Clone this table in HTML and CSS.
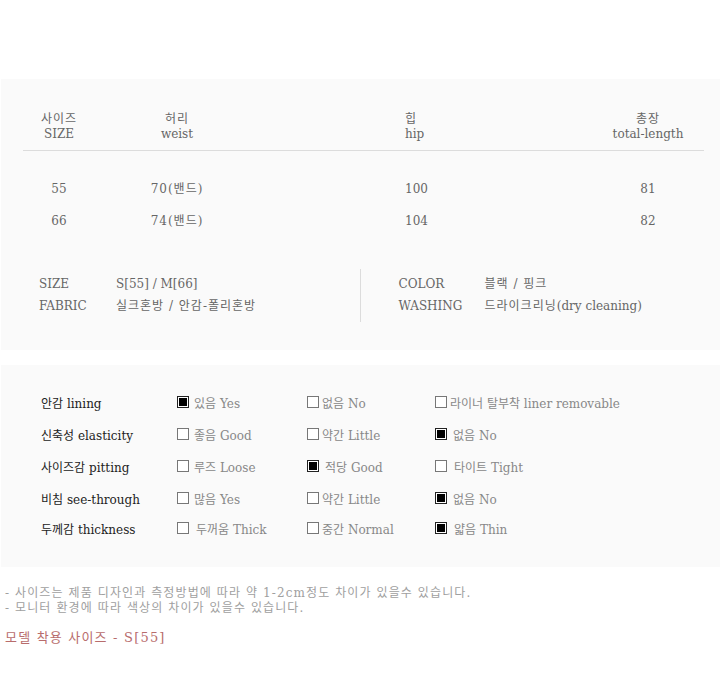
FILE: index.html
```html
<!DOCTYPE html>
<html lang="ko">
<head>
<meta charset="utf-8">
<title>Size info</title>
<link rel="stylesheet" href="styles.css">
</head>
<body>
<div class="page">
  <section class="box size-box">
    <div class="size-table">
      <div class="cell c1 head"><span class="ko">사이즈</span><br>SIZE</div>
      <div class="cell c2 head"><span class="ko">허리</span><br>weist</div>
      <div class="cell c3 head">힙<br>hip</div>
      <div class="cell c4 head"><span class="ko">총장</span><br>total-length</div>
      <div class="rule"></div>
      <div class="cell c1 row first">55</div>
      <div class="cell c2 row first ko">70(밴드)</div>
      <div class="cell c3 row first">100</div>
      <div class="cell c4 row first">81</div>
      <div class="cell c1 row">66</div>
      <div class="cell c2 row ko">74(밴드)</div>
      <div class="cell c3 row">104</div>
      <div class="cell c4 row">82</div>
    </div>
    <div class="info">
      <div class="info-half left">
        <div class="info-line"><span class="k k1">SIZE</span><span class="v">S[55] / M[66]</span></div>
        <div class="info-line"><span class="k k1">FABRIC</span><span class="v ko">실크혼방 / 안감-폴리혼방</span></div>
      </div>
      <div class="info-half right">
        <div class="info-line"><span class="k k2">COLOR</span><span class="v ko">블랙 / 핑크</span></div>
        <div class="info-line"><span class="k k2">WASHING</span><span class="v"><span class="ko">드라이크리닝</span>(dry cleaning)</span></div>
      </div>
    </div>
  </section>

  <section class="box feel-box">
    <div class="feel">
      <div class="lbl">안감 lining</div>
      <div class="opt a"><span class="cb on white"></span>있음 Yes</div>
      <div class="opt b"><span class="cb white"></span>없음 No</div>
      <div class="opt c"><span class="cb white"></span>라이너 탈부착 liner removable</div>

      <div class="lbl">신축성 elasticity</div>
      <div class="opt a"><span class="cb"></span>좋음 Good</div>
      <div class="opt b"><span class="cb"></span>약간 Little</div>
      <div class="opt c wide"><span class="cb on"></span>없음 No</div>

      <div class="lbl">사이즈감 pitting</div>
      <div class="opt a"><span class="cb"></span>루즈 Loose</div>
      <div class="opt b wide"><span class="cb on"></span>적당 Good</div>
      <div class="opt c wider"><span class="cb"></span>타이트 Tight</div>

      <div class="lbl">비침 see-through</div>
      <div class="opt a"><span class="cb"></span>많음 Yes</div>
      <div class="opt b"><span class="cb"></span>약간 Little</div>
      <div class="opt c wide"><span class="cb on"></span>없음 No</div>

      <div class="lbl">두께감 thickness</div>
      <div class="opt a wider"><span class="cb"></span>두꺼움 Thick</div>
      <div class="opt b"><span class="cb"></span>중간 Normal</div>
      <div class="opt c wider"><span class="cb on"></span>얇음 Thin</div>
    </div>
  </section>

  <div class="notes">
    <p>- 사이즈는 제품 디자인과 측정방법에 따라 약 1-2cm정도 차이가 있을수 있습니다.</p>
    <p>- 모니터 환경에 따라 색상의 차이가 있을수 있습니다.</p>
  </div>
  <p class="model">모델 착용 사이즈 - S[55]</p>
</div>
</body>
</html>
```

FILE: styles.css
```css
html, body {
  margin: 0;
  padding: 0;
  background: #fff;
}
body {
  font-family: "DejaVu Serif", "Liberation Serif", "Noto Sans CJK KR", serif;
  font-size: 12px;
  color: #666;
}
.page {
  padding-top: 79px;
}
.ko {
  letter-spacing: 1px;
}
.box {
  background: #fafafa;
  margin-left: 1px;
}
.size-box {
  height: 271px;
  padding-top: 33px;
  box-sizing: border-box;
}
.size-table {
  display: grid;
  grid-template-columns: 72px 164px 1fr 112px;
  margin: 0 16px 0 22px;
}
.cell {
  line-height: 15px;
}
.head {
  padding-bottom: 8px;
}
.rule {
  grid-column: 1 / -1;
  height: 1px;
  background: #dcdcdc;
}
.row {
  line-height: 32px;
}
.row.first {
  margin-top: 22px;
}
.c1, .c2, .c4 {
  text-align: center;
}
.c3 {
  padding-left: 146px;
}
.info {
  display: flex;
  margin-top: 32px;
}
.info-half {
  width: 360px;
  padding: 4px 0 5px 38px;
  box-sizing: border-box;
}
.info-half.left {
  border-right: 1px solid #dcdcdc;
}
.info-line {
  display: flex;
  line-height: 22px;
}
.k1 {
  width: 77px;
}
.k2 {
  width: 86px;
}
.feel-box {
  margin-top: 15px;
  padding: 21px 0 25px 40px;
}
.feel {
  display: grid;
  grid-template-columns: 136px 130px 128px auto;
  grid-template-rows: 32px 32px 32px 32px 28px;
  align-items: center;
}
.lbl {
  color: #222;
}
.opt {
  display: flex;
  align-items: center;
  color: #888;
}
.opt.a {
  gap: 5px;
}
.opt.b, .opt.c {
  gap: 3px;
}
.opt.wide {
  gap: 6px;
}
.opt.wider {
  gap: 7px;
}
.cb {
  width: 12px;
  height: 12px;
  box-sizing: border-box;
  border: 1px solid #777;
  background: #fff;
  flex: none;
}
.cb.on {
  border: 1px solid #222;
  padding: 1px;
  background: #000;
  background-clip: content-box;
  box-shadow: inset 0 0 0 1px #fff;
}
.notes {
  margin: 19px 0 0 5px;
  color: #a0a0a0;
  letter-spacing: 1.1px;
}
.notes p {
  margin: 0;
  line-height: 15px;
}
.model {
  margin: 14px 0 0 5px;
  color: #b86c6c;
  font-size: 13px;
  line-height: 15px;
  letter-spacing: 1.2px;
}
```
